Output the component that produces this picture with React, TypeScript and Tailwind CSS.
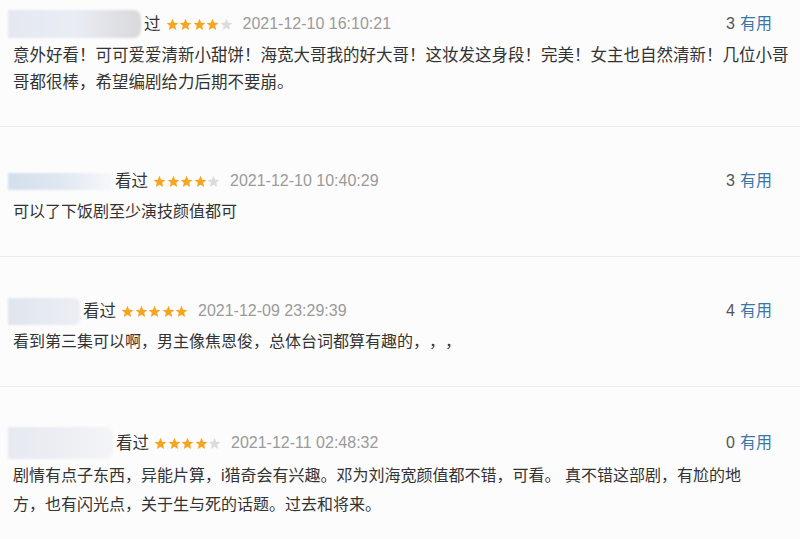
import React from "react";

type Review = {
  blurW: number;
  blurH: number;
  blurClass: string;
  label: string;
  stars: number;
  date: string;
  useful: string;
  lines: string[];
  pt: string;
  pb: string;
  text: string;
};

const reviews: Review[] = [
  {
    blurW: 133,
    blurH: 28,
    blurClass: "bg-gradient-to-r from-[#e4e8f1] via-[#eaedf4] to-[#d9d9dc] rounded-r-[8px]",
    label: "过",
    stars: 4,
    date: "2021-12-10 16:10:21",
    useful: "3",
    lines: [
      "意外好看！可可爱爱清新小甜饼！海宽大哥我的好大哥！这妆发这身段！完美！女主也自然清新！几位小哥",
      "哥都很棒，希望编剧给力后期不要崩。",
    ],
    pt: "pt-[12px]",
    pb: "pb-[30px]",
    text: "text-[16.5px] leading-[27px]",
  },
  {
    blurW: 104,
    blurH: 17,
    blurClass: "bg-gradient-to-r from-[#d3dfec] via-[#dfe7f1] to-[#f6f8fb]",
    label: "看过",
    stars: 4,
    date: "2021-12-10 10:40:29",
    useful: "3",
    lines: ["可以了下饭剧至少演技颜值都可"],
    pt: "pt-[42px]",
    pb: "pb-[31px]",
    text: "text-[16px] leading-[26px]",
  },
  {
    blurW: 72,
    blurH: 27,
    blurClass: "bg-gradient-to-r from-[#dfe5ee] via-[#e6eaf1] to-[#eceef3] rounded-r-[6px]",
    label: "看过",
    stars: 5,
    date: "2021-12-09 23:29:39",
    useful: "4",
    lines: ["看到第三集可以啊，男主像焦恩俊，总体台词都算有趣的，，，"],
    pt: "pt-[42px]",
    pb: "pb-[31px]",
    text: "text-[16px] leading-[26px]",
  },
  {
    blurW: 105,
    blurH: 32,
    blurClass: "bg-gradient-to-r from-[#e6e9f0] via-[#eceef3] to-[#f4f5f8] rounded-r-[8px]",
    label: "看过",
    stars: 4,
    date: "2021-12-11 02:48:32",
    useful: "0",
    lines: [
      "剧情有点子东西，异能片算，i猎奇会有兴趣。邓为刘海宽颜值都不错，可看。 真不错这部剧，有尬的地",
      "方，也有闪光点，关于生与死的话题。过去和将来。",
    ],
    pt: "pt-[44px]",
    pb: "pb-[40px]",
    text: "text-[16px] leading-[29px]",
  },
];

function Star({ filled }: { filled: boolean }) {
  return (
    <svg width="13" height="13" viewBox="0 0 24 24" className="flex-none">
      <polygon
        points="12,1.5 15.1,8.6 22.8,9.3 17,14.4 18.7,22 12,18 5.3,22 7,14.4 1.2,9.3 8.9,8.6"
        fill={filled ? "#f5a51f" : "#dcdcdc"}
      />
    </svg>
  );
}

export default function App() {
  return (
    <div
      className="w-[800px] h-[539px] overflow-hidden bg-[#fcfcfc] text-[#333] [text-spacing-trim:space-all]"
      style={{ fontFamily: '"Liberation Sans", "Noto Sans CJK SC", sans-serif' }}
    >
      {reviews.map((r, i) => (
        <div
          key={i}
          className={`${r.pt} ${r.pb} ${i < reviews.length - 1 ? "border-b border-[#ececec]" : ""}`}
        >
          <div className="h-[24px] flex items-center pr-[28px]">
            <div
              className={`flex-none ml-[8px] blur-[1px] ${r.blurClass}`}
              style={{ width: r.blurW, height: r.blurH }}
            />
            <span className="ml-[3px] text-[16.5px] leading-none text-[#333]">{r.label}</span>
            <div className="ml-[5px] flex items-center gap-[0.5px]">
              {[0, 1, 2, 3, 4].map((s) => (
                <Star key={s} filled={s < r.stars} />
              ))}
            </div>
            <span className="ml-[10px] text-[16px] leading-none text-[#9a9a9a]">{r.date}</span>
            <div className="ml-auto flex items-center gap-[5px] text-[16px] leading-none">
              <span className="text-[#555]">{r.useful}</span>
              <span className="text-[#3a77a8]">有用</span>
            </div>
          </div>
          <div className={`mt-[6px] pl-[13px] ${r.text} text-[#333] whitespace-nowrap`}>
            {r.lines.map((l, j) => (
              <div key={j}>{l}</div>
            ))}
          </div>
        </div>
      ))}
    </div>
  );
}
